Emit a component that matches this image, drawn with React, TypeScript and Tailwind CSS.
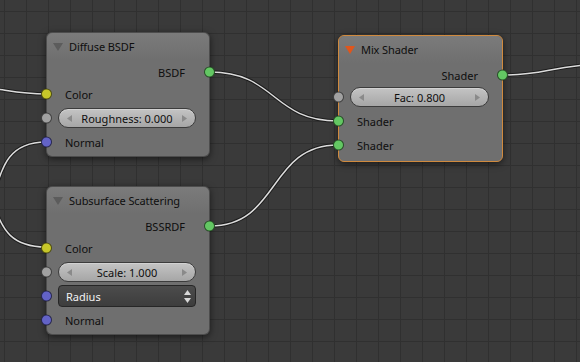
import type { ReactNode } from 'react';

type SocketKind = 'shader' | 'color' | 'value' | 'vector';

const SOCKET_BG: Record<SocketKind, string> = {
  shader: 'bg-[#63c763]',
  color: 'bg-[#c7c729]',
  value: 'bg-[#a1a1a1]',
  vector: 'bg-[#6363c7]',
};

const WIRES = [
  'M 210 72 C 276 72, 272 121, 338 121',
  'M 210 226 C 280 226, 268 145, 338 145',
  'M 503 75 C 545 75, 550 66, 600 64',
  'M -60 84 C 0 86, 10 94, 46 94',
  'M 46 142 C 10 142, 2 165, -6 195',
  'M -6 205 C 2 230, 12 247, 46 247',
];

const Socket = ({ kind, side }: { kind: SocketKind; side: 'left' | 'right' }) => (
  <span
    className={`absolute top-1/2 size-[11px] -translate-y-1/2 rounded-full border border-black/60 ${SOCKET_BG[kind]} ${
      side === 'left' ? 'left-[-6px]' : 'right-[-6px]'
    }`}
  />
);

const Output = ({ label, kind }: { label: string; kind: SocketKind }) => (
  <div className="relative flex h-[20px] items-center justify-end pr-[24px]">
    <span>{label}</span>
    <Socket kind={kind} side="right" />
  </div>
);

const Input = ({ label, kind }: { label: string; kind: SocketKind }) => (
  <div className="relative flex h-[24px] items-center pl-[18px]">
    <span>{label}</span>
    <Socket kind={kind} side="left" />
  </div>
);

const Slider = ({ label }: { label: string }) => (
  <div className="relative flex h-[24px] items-center pl-[11px] pr-[13px]">
    <Socket kind="value" side="left" />
    <div className="flex h-[20px] flex-1 items-center justify-between rounded-full border border-[#3c3c3c] bg-linear-to-b from-[#c4c4c4] to-[#a6a6a6] px-[8px] shadow-[inset_0_1px_0_rgba(255,255,255,0.25)]">
      <svg width="5" height="7" viewBox="0 0 5 7">
        <polygon points="5,0 0,3.5 5,7" fill="#8a8a8a" />
      </svg>
      <span>{label}</span>
      <svg width="5" height="7" viewBox="0 0 5 7">
        <polygon points="0,0 5,3.5 0,7" fill="#8a8a8a" />
      </svg>
    </div>
  </div>
);

const Dropdown = ({ label }: { label: string }) => (
  <div className="relative flex h-[24px] items-center pl-[11px] pr-[13px]">
    <Socket kind="vector" side="left" />
    <div className="flex h-[22px] flex-1 items-center justify-between rounded-[4px] border border-[#262626] bg-linear-to-b from-[#4c4c4c] to-[#3d3d3d] pl-[7px] pr-[4px] text-[#f2f2f2]">
      <span>{label}</span>
      <svg width="7" height="13" viewBox="0 0 7 13">
        <polygon points="0,5 3.5,0 7,5" fill="#d8d8d8" />
        <polygon points="0,8 3.5,13 7,8" fill="#d8d8d8" />
      </svg>
    </div>
  </div>
);

const Node = ({
  title,
  active,
  className,
  children,
}: {
  title: string;
  active?: boolean;
  className: string;
  children: ReactNode;
}) => (
  <div
    className={`absolute flex flex-col rounded-[6px] border bg-[#6f6f6f] shadow-[0_2px_7px_rgba(0,0,0,0.55)] ${
      active ? 'border-[#d08a3e]' : 'border-black/30'
    } ${className}`}
  >
    <div className="flex h-[27px] items-center gap-[6px] rounded-t-[6px] bg-linear-to-b from-[#7b7b7b] to-[#6f6f6f] pl-[6px]">
      <svg width="10" height="8" viewBox="0 0 10 8">
        <polygon points="0,0 10,0 5,8" fill={active ? '#e0561c' : '#5c5c5c'} />
      </svg>
      <span className="tracking-[-0.1px]">{title}</span>
    </div>
    <div className="flex flex-col pt-[2px]">{children}</div>
  </div>
);

export default function App() {
  return (
    <div className="relative h-[362px] w-[580px] overflow-hidden bg-[#3a3a3a] bg-[linear-gradient(to_right,#303030_1px,transparent_1px),linear-gradient(to_bottom,#303030_1px,transparent_1px)] bg-size-[22px_22px] bg-position-[4px_11px] font-['Noto_Sans','DejaVu_Sans',sans-serif] text-[11px] leading-none text-[#0e0e0e]">
      <svg className="absolute inset-0" width="580" height="362">
        {WIRES.map((d) => (
          <g key={d} fill="none">
            <path d={d} stroke="#1c1c1c" strokeWidth="3.5" />
            <path d={d} stroke="#dcdcdc" strokeWidth="1.5" />
          </g>
        ))}
      </svg>

      <Node title="Diffuse BSDF" className="left-[46px] top-[32px] h-[125px] w-[164px]">
        <Output label="BSDF" kind="shader" />
        <Input label="Color" kind="color" />
        <Slider label="Roughness: 0.000" />
        <Input label="Normal" kind="vector" />
      </Node>

      <Node title="Subsurface Scattering" className="left-[46px] top-[186px] h-[149px] w-[164px]">
        <Output label="BSSRDF" kind="shader" />
        <Input label="Color" kind="color" />
        <Slider label="Scale: 1.000" />
        <Dropdown label="Radius" />
        <Input label="Normal" kind="vector" />
      </Node>

      <Node title="Mix Shader" active className="left-[338px] top-[35px] h-[127px] w-[165px]">
        <Output label="Shader" kind="shader" />
        <Slider label="Fac: 0.800" />
        <Input label="Shader" kind="shader" />
        <Input label="Shader" kind="shader" />
      </Node>
    </div>
  );
}
